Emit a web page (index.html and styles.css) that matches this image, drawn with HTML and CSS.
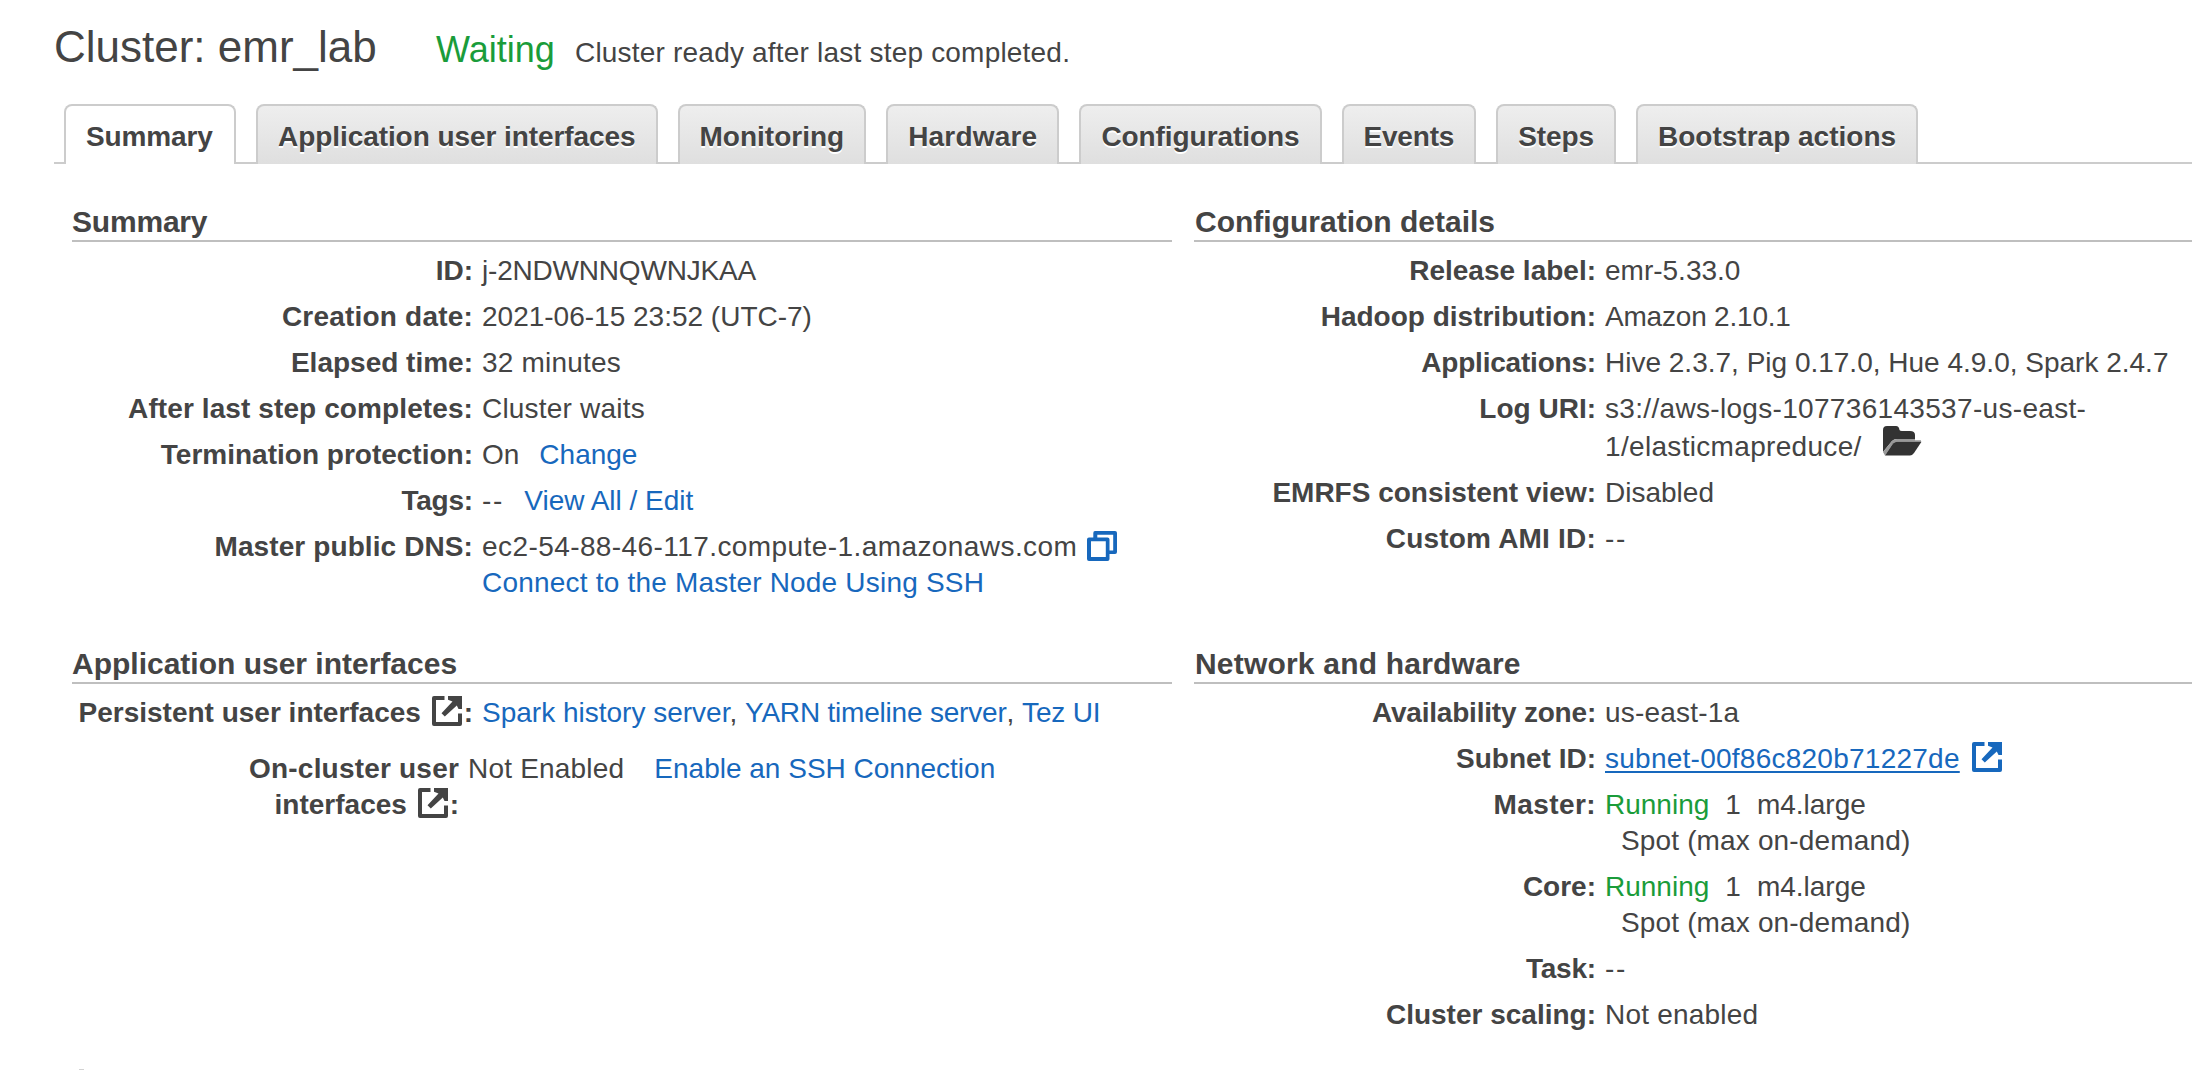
FILE: index.html
```
<!DOCTYPE html>
<html lang="en">
<head>
<meta charset="utf-8">
<title>Cluster: emr_lab</title>
<link rel="stylesheet" href="styles.css">
</head>
<body>
<svg class="symbols" aria-hidden="true">
  <symbol id="external" viewBox="0 0 30 30">
    <path d="M12.500 0H2Q0 0 0 2V28Q0 30 2 30H28Q30 30 30 28V17.500H26V26H4V4H12.500Z M16 0H30V13H26.500L24.800 9.500L12.800 20.500L9.500 17.300L20.500 5.500L16 3.800Z"/>
  </symbol>
  <symbol id="copy" viewBox="0 0 30 30">
    <path fill-rule="evenodd" d="M8 0H28Q30 0 30 2V21Q30 23 28 23H22.500V28Q22.500 30 20.500 30H2Q0 30 0 28V8.500Q0 6.500 2 6.500H6.300V2Q6.300 0 8 0ZM10.300 3.800V6.500H20.500Q22.500 6.500 22.500 8.500V19.500H26.200V3.800ZM4 10.300V26H18.800V10.300Z"/>
  </symbol>
  <symbol id="folder" viewBox="0 0 39 30">
    <path d="M0 26V4Q0 0 4 0H13Q16 0 16.500 4Q17 5 19 5H27Q32 5 32 9V13H14Q11 13 9 15Z"/>
    <path d="M0 26L9 15Q11 13 14 13H32V14.200H38V15.800H14Q12 15.800 10 17.500L2 29.500Z" fill="#999"/>
    <path d="M2 29.500L10 17.500Q12 15.800 14 15.800H38.500L31 27Q29 29.500 27 29.500Z"/>
  </symbol>
</svg>

<header class="cluster-header">
  <h1>Cluster: emr_lab</h1>
  <span class="state">Waiting</span>
  <span class="detail track">Cluster ready after last step completed.</span>
</header>

<nav class="tabs">
  <a class="tab active">Summary</a>
  <a class="tab snug">Application user interfaces</a>
  <a class="tab">Monitoring</a>
  <a class="tab track">Hardware</a>
  <a class="tab snug">Configurations</a>
  <a class="tab tight">Events</a>
  <a class="tab snug">Steps</a>
  <a class="tab">Bootstrap actions</a>
</nav>

<main class="panels">
  <section>
    <h2 class="tight">Summary</h2>
    <dl>
      <dt>ID:</dt><dd class="tight">j-2NDWNNQWNJKAA</dd>
      <dt class="track">Creation date:</dt><dd>2021-06-15 23:52 (UTC-7)</dd>
      <dt>Elapsed time:</dt><dd class="track">32 minutes</dd>
      <dt class="loose">After last step completes:</dt><dd class="track">Cluster waits</dd>
      <dt>Termination protection:</dt><dd>On<a class="action on">Change</a></dd>
      <dt class="tight">Tags:</dt><dd><span class="dashes">--</span><a class="action tags">View All / Edit</a></dd>
      <dt class="loose">Master public DNS:</dt>
      <dd><span class="wide">ec2-54-88-46-117.compute-1.amazonaws.com</span><svg class="icon copy"><use href="#copy"/></svg><br><a class="track">Connect to the Master Node Using SSH</a></dd>
    </dl>
  </section>

  <section>
    <h2>Configuration details</h2>
    <dl>
      <dt>Release label:</dt><dd>emr-5.33.0</dd>
      <dt>Hadoop distribution:</dt><dd class="tight">Amazon 2.10.1</dd>
      <dt class="tight">Applications:</dt><dd>Hive 2.3.7, Pig 0.17.0, Hue 4.9.0, Spark 2.4.7</dd>
      <dt>Log URI:</dt>
      <dd class="log">s3://aws-logs-107736143537-us-east-<br>1/elasticmapreduce/<svg class="icon folder"><use href="#folder"/></svg></dd>
      <dt>EMRFS consistent view:</dt><dd>Disabled</dd>
      <dt class="track">Custom AMI ID:</dt><dd><span class="dashes">--</span></dd>
    </dl>
  </section>

  <section>
    <h2>Application user interfaces</h2>
    <dl>
      <dt>Persistent user interfaces <svg class="icon ext"><use href="#external"/></svg>:</dt>
      <dd><a>Spark history server</a>, <a class="tight">YARN timeline server</a>, <a class="tight">Tez UI</a></dd>
    </dl>
    <dl class="on-cluster">
      <dt><span class="track">On-cluster user</span><br>interfaces <svg class="icon ext"><use href="#external"/></svg>:</dt>
      <dd><span class="track">Not Enabled</span><a class="action ssh">Enable an SSH Connection</a></dd>
    </dl>
  </section>

  <section>
    <h2 class="track">Network and hardware</h2>
    <dl>
      <dt class="tight">Availability zone:</dt><dd class="track">us-east-1a</dd>
      <dt>Subnet ID:</dt><dd><a class="subnet">subnet-00f86c820b71227de</a><svg class="icon ext blue"><use href="#external"/></svg></dd>
      <dt class="wide">Master:</dt>
      <dd><span class="running">Running</span><span class="count">1</span>m4.large<br><span class="market">Spot (max on-demand)</span></dd>
      <dt>Core:</dt>
      <dd><span class="running">Running</span><span class="count">1</span>m4.large<br><span class="market">Spot (max on-demand)</span></dd>
      <dt class="tight">Task:</dt><dd><span class="dashes">--</span></dd>
      <dt>Cluster scaling:</dt><dd class="track">Not enabled</dd>
    </dl>
  </section>
</main>
<div class="next-section"></div>
</body>
</html>
```
FILE: styles.css
```
* { box-sizing: border-box; }

body {
  margin: 0;
  height: 1070px;
  display: flex;
  flex-direction: column;
  overflow: hidden;
  background: #fff;
  color: #444;
  font: 28px/36px "Liberation Sans", Arial, sans-serif;
}

.symbols { display: none; }
.track { letter-spacing: 0.2px; }
.loose { letter-spacing: 0.1px; }
.wide { letter-spacing: 0.42px; }
.snug { letter-spacing: -0.07px; }
.tight { letter-spacing: -0.2px; }

.cluster-header {
  display: flex;
  align-items: baseline;
  height: 104px;
  padding: 21px 0 0 54px;
  white-space: nowrap;
}
.cluster-header h1 {
  margin: 0;
  width: 382px;
  font-size: 44px;
  line-height: 52px;
  font-weight: 400;
}
.state {
  width: 139px;
  font-size: 36px;
  color: #1a9c3a;
}

.tabs {
  display: flex;
  gap: 20px;
  height: 60px;
  margin-left: 54px;
  padding-left: 10px;
  background: linear-gradient(#ccc, #ccc) bottom / 100% 2px no-repeat;
}
.tab {
  flex: none;
  padding: 13px 20px 0;
  border: 2px solid #ccc;
  border-bottom: 0;
  border-radius: 8px 8px 0 0;
  background: linear-gradient(#eee, #dfdfdf);
  font-weight: 700;
  text-shadow: 0 2px 0 #fff;
}
.tab.active {
  min-width: 172px;
  background: #fff;
  letter-spacing: -0.15px;
}

.panels {
  display: grid;
  grid-template-columns: 1100px 998px;
  column-gap: 22px;
  row-gap: 40px;
  padding: 40px 0 0 72px;
}
h2 {
  height: 38px;
  margin: 0 0 6px;
  border-bottom: 2px solid #bfbfbf;
  font-size: 30px;
  line-height: 36px;
  font-weight: 700;
}
dl {
  display: grid;
  grid-template-columns: 401px 1fr;
  column-gap: 9px;
  margin: 0;
  white-space: nowrap;
}
dt, dd { margin: 0; padding: 5px 0; }
dt { font-weight: 700; text-align: right; }
section:nth-child(even) h2 { padding-left: 1px; }
section:nth-child(even) dl { grid-template-columns: 402px 1fr; }

a { color: #1768bd; }
.tab { color: #444; }
.action.on { margin-left: 20px; }
.action.tags { margin-left: 20px; }
.action.ssh { margin-left: 30px; }
.dashes { letter-spacing: 1.8px; }
.subnet {
  letter-spacing: 0.25px;
  text-decoration: underline;
  text-decoration-thickness: 2px;
  text-underline-offset: 3px;
}

/* negative block margins keep the icons from stretching their text line */
.icon {
  width: 30px;
  height: 30px;
  margin: -8px 0;
  fill: currentColor;
  vertical-align: 4px;
}
.copy { margin-left: 10px; color: #1768bd; vertical-align: 3px; }
.ext { margin-left: 3px; margin-right: 2px; }
.ext.blue { margin-left: 12px; color: #1768bd; }
.folder {
  width: 39px;
  margin-left: 21px;
  color: #333;
  vertical-align: 8px;
}
.log { padding: 4px 0; letter-spacing: 0.32px; line-height: 38px; }

.on-cluster {
  grid-template-columns: 387px 1fr;
  margin-top: 10px;
}
.running { color: #1a9c3a; }
.count { margin: 0 16px; }
.market { padding-left: 16px; letter-spacing: 0.15px; }

/* top edge of the section heading that follows below the fold */
.next-section {
  flex: none;
  width: 5px;
  height: 1px;
  margin: auto 0 0 79px;
  background: #d2d2d2;
}
```
